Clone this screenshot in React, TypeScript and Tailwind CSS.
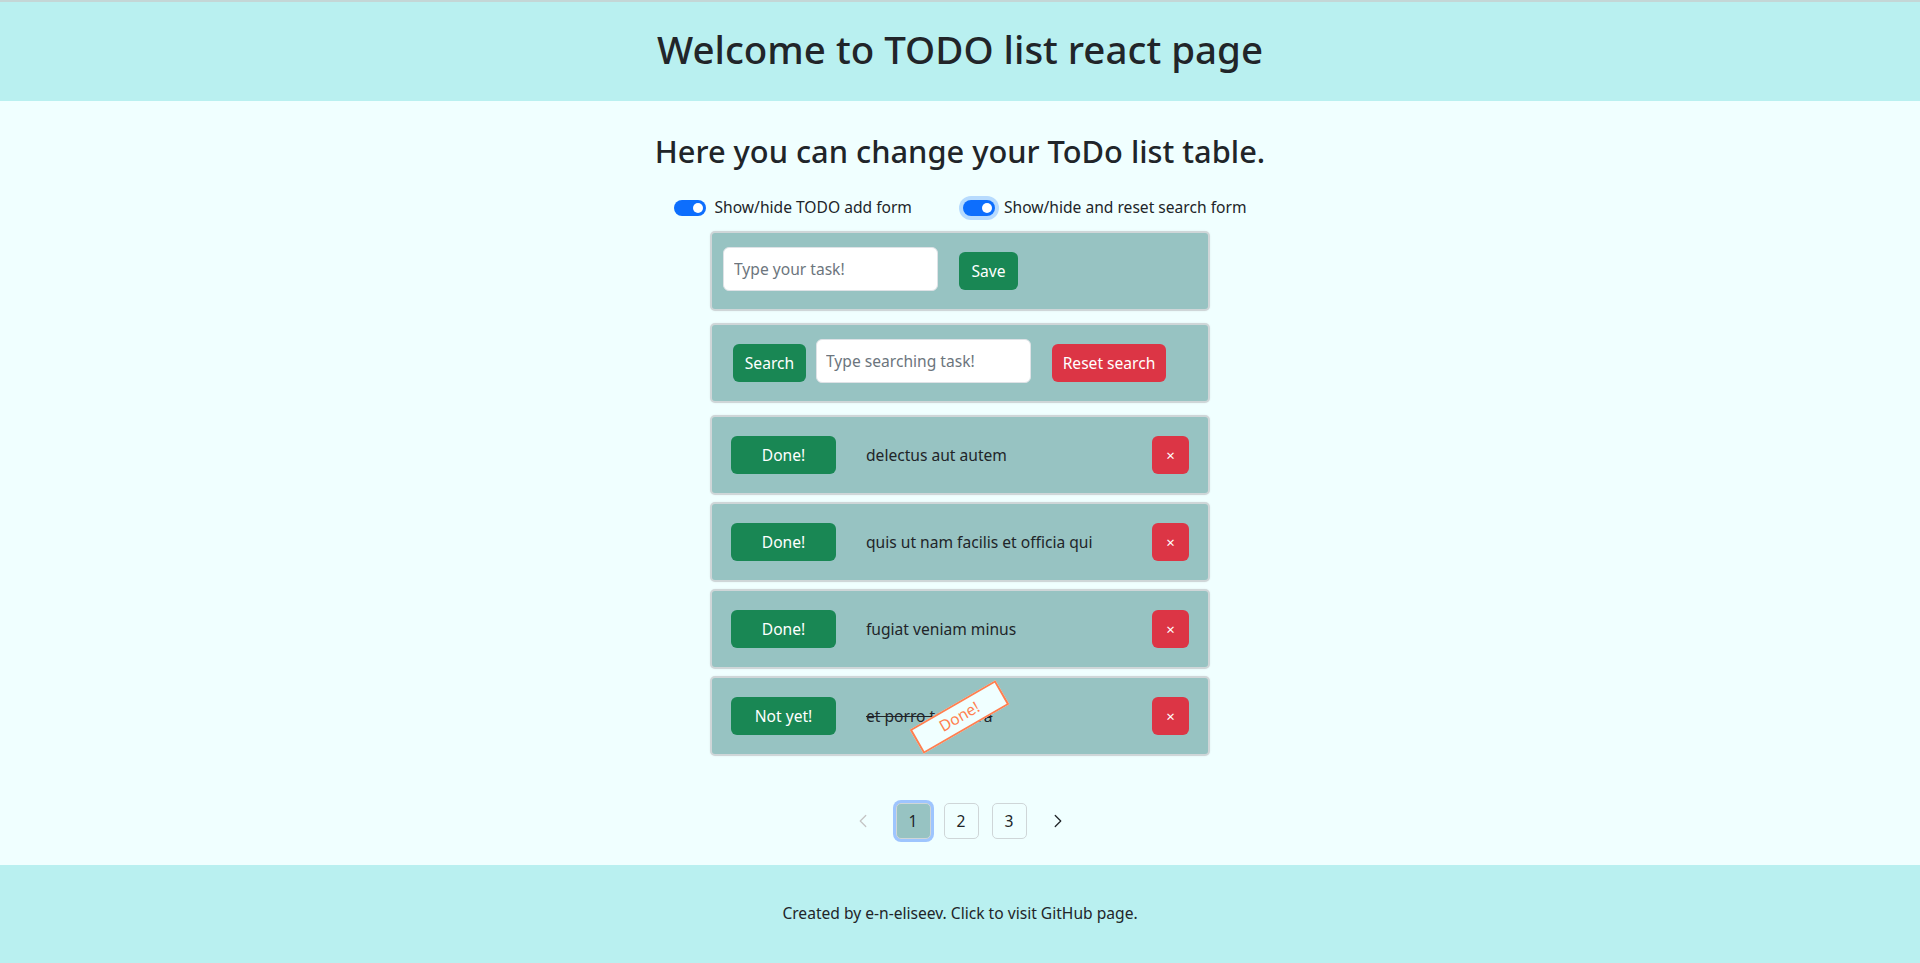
import React from 'react';
import { ChevronLeft, ChevronRight } from 'lucide-react';

interface TodoItem {
  id: number;
  title: string;
  completed: boolean;
}

const TODOS: TodoItem[] = [
  { id: 1, title: 'delectus aut autem', completed: false },
  { id: 2, title: 'quis ut nam facilis et officia qui', completed: false },
  { id: 3, title: 'fugiat veniam minus', completed: false },
  { id: 4, title: 'et porro tempora', completed: true },
];

const FONT = "font-['Segoe_UI','Noto_Sans','Open_Sans',sans-serif]";

const Toggle: React.FC<{ label: string; focused?: boolean }> = ({ label, focused }) => (
  <label className="flex items-center gap-[9px] text-[15.6px] text-[#212529]">
    <span
      className={`relative inline-block w-[32px] h-[16px] rounded-full bg-[#0d6efd] ${
        focused ? 'ring-4 ring-[#0d6efd]/25' : ''
      }`}
    >
      <span className="absolute right-[3px] top-[3px] w-[10px] h-[10px] rounded-full bg-white" />
    </span>
    {label}
  </label>
);

const Card: React.FC<{ children: React.ReactNode; className?: string }> = ({ children, className = '' }) => (
  <div
    className={`relative h-[80px] w-[500px] rounded-[5px] border-2 border-[#cfd6d8] bg-[#97c3c2] shadow-[0_0_2px_rgba(0,0,0,0.08)] flex items-center ${className}`}
  >
    {children}
  </div>
);

const App: React.FC = () => {
  return (
    <div className={`min-h-screen flex flex-col ${FONT}`}>
      <header className="h-[101px] border-t-2 border-[#c4d6d6] bg-[#b9f0f0] flex items-center justify-center pb-[4px]">
        <h1 className="text-[38.5px] font-medium text-[#212529] leading-[1.2]">Welcome to TODO list react page</h1>
      </header>

      <main className="flex-1 bg-[#f0ffff] flex flex-col items-center pt-[32px] text-[15.6px]">
        <h2 className="text-[30.8px] font-medium text-[#212529] leading-[1.2]">Here you can change your ToDo list table.</h2>

        <div className="mt-[26px] flex items-center justify-center gap-[51px]">
          <Toggle label="Show/hide TODO add form" />
          <Toggle label="Show/hide and reset search form" focused />
        </div>

        <div className="mt-[12px] flex flex-col">
          <Card className="px-[11px] gap-[21px]">
            <input
              className="mb-[4px] h-[44px] w-[215px] rounded-[6px] border border-[#dee2e6] bg-white px-[10px] text-[15.6px] placeholder:text-[#6c757d] outline-none"
              placeholder="Type your task!"
            />
            <button className="h-[38px] w-[59px] rounded-[6px] bg-[#198754] text-white">Save</button>
          </Card>

          <Card className="mt-[12px] pl-[21px]">
            <button className="h-[38px] w-[73px] rounded-[6px] bg-[#198754] text-white">Search</button>
            <input
              className="ml-[10px] mb-[4px] h-[44px] w-[215px] rounded-[6px] border border-[#dee2e6] bg-white px-[9px] text-[15.6px] placeholder:text-[#6c757d] outline-none"
              placeholder="Type searching task!"
            />
            <button className="ml-[21px] h-[38px] w-[114px] rounded-[6px] bg-[#dc3545] text-white">Reset search</button>
          </Card>

          <div className="mt-[12px] flex flex-col gap-[7px]">
            {TODOS.map((todo) => (
              <Card key={todo.id} className="px-[19px]">
                <button className="h-[38px] w-[105px] rounded-[6px] bg-[#198754] text-white">
                  {todo.completed ? 'Not yet!' : 'Done!'}
                </button>
                <span className={`ml-[30px] flex-1 text-[#212529] ${todo.completed ? 'line-through' : ''}`}>
                  {todo.title}
                </span>
                <button className="h-[38px] w-[37px] rounded-[6px] bg-[#dc3545] text-white text-[15px]">×</button>
                {todo.completed && (
                  <div className="absolute left-[198px] top-[25px] w-[99px] h-[28px] -rotate-[30deg] border-2 border-[#ff7f50] bg-[#f0ffff] flex items-center justify-center text-[15.6px] text-[#ff7f50]">
                    Done!
                  </div>
                )}
              </Card>
            ))}
          </div>
        </div>

        <nav className="mt-[47px] flex items-center gap-[13px] text-[#212529]">
          <ChevronLeft className="mr-[9px] w-[22px] h-[22px] text-[#c4c4c4]" strokeWidth={1.4} />
          <button className="h-[36px] w-[35px] rounded-[5px] border border-[#cfd6d8] bg-[#97c3c2] ring-[3px] ring-[#9ec5fe]">1</button>
          <button className="h-[36px] w-[35px] rounded-[5px] border border-[#cfd6d8]">2</button>
          <button className="h-[36px] w-[35px] rounded-[5px] border border-[#cfd6d8]">3</button>
          <ChevronRight className="ml-[7px] w-[22px] h-[22px] text-[#212529]" strokeWidth={1.4} />
        </nav>
      </main>

      <footer className="h-[98px] bg-[#b9f0f0] flex items-center justify-center text-[15.6px] text-[#212529]">
        Created by e-n-eliseev. Click to visit GitHub page.
      </footer>
    </div>
  );
};

export default App;
